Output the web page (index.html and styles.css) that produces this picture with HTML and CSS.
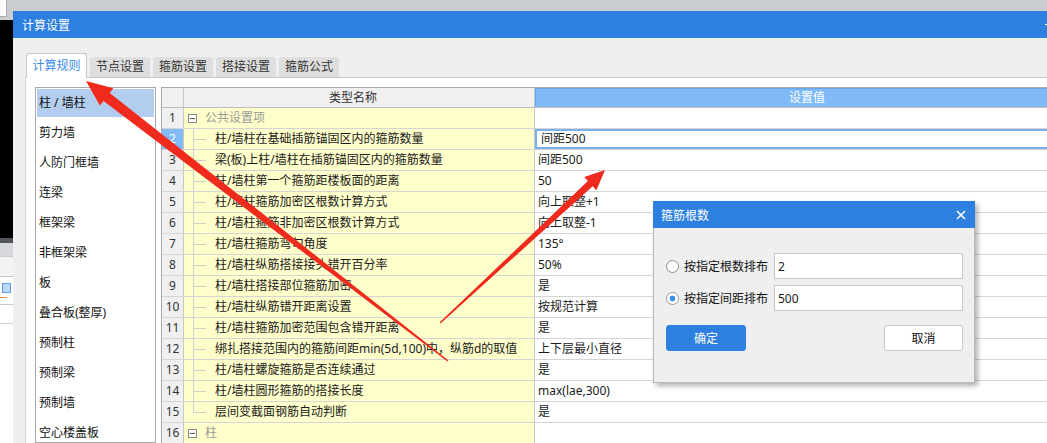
FILE: index.html
```html
<!DOCTYPE html>
<html lang="zh-CN">
<head>
    <meta charset="UTF-8">
    <title>计算设置</title>
    <link rel="stylesheet" href="styles.css">
</head>
<body>
<div class="desk">
    <!-- the application behind the settings window, only a sliver shows -->
    <div class="backdrop">
        <div class="bk-top"><span class="bk-box"></span></div>
        <div class="bk-dark"></div>
        <div class="bk-bar"></div>
        <div class="bk-band"></div>
        <div class="bk-row"></div>
        <div class="bk-tool"><span class="bk-icon"></span><span class="bk-dash"></span></div>
        <div class="bk-list"></div>
    </div>

    <div class="main">
        <div class="top-strip"></div>
        <div class="window">
            <div class="titlebar"><span>计算设置</span><span class="win-ctrl"></span></div>
            <div class="win-body">
                <div class="tabs">
                    <div class="tab active">计算规则</div>
                    <div class="tab">节点设置</div>
                    <div class="tab">箍筋设置</div>
                    <div class="tab">搭接设置</div>
                    <div class="tab">箍筋公式</div>
                </div>
                <div class="panel">
                    <ul class="cat-list">
                        <li class="selected">柱 / 墙柱</li>
                        <li>剪力墙</li>
                        <li>人防门框墙</li>
                        <li>连梁</li>
                        <li>框架梁</li>
                        <li>非框架梁</li>
                        <li>板</li>
                        <li>叠合板(整厚)</li>
                        <li>预制柱</li>
                        <li>预制梁</li>
                        <li>预制墙</li>
                        <li>空心楼盖板</li>
                    </ul>

                    <div class="grid">
                        <div class="row head">
                            <div class="num"></div>
                            <div class="name">类型名称</div>
                            <div class="val">设置值</div>
                        </div>
                        <div class="row group">
                            <div class="num">1</div>
                            <div class="name"><span class="toggle"></span>公共设置项</div>
                            <div class="val"></div>
                        </div>
                        <div class="row">
                            <div class="num sel">2</div>
                            <div class="name"><span class="branch"></span>柱/墙柱在基础插筋锚固区内的箍筋数量</div>
                            <div class="val edit">间距500</div>
                        </div>
                        <div class="row">
                            <div class="num">3</div>
                            <div class="name"><span class="branch"></span>梁(板)上柱/墙柱在插筋锚固区内的箍筋数量</div>
                            <div class="val">间距500</div>
                        </div>
                        <div class="row">
                            <div class="num">4</div>
                            <div class="name"><span class="branch"></span>柱/墙柱第一个箍筋距楼板面的距离</div>
                            <div class="val">50</div>
                        </div>
                        <div class="row">
                            <div class="num">5</div>
                            <div class="name"><span class="branch"></span>柱/墙柱箍筋加密区根数计算方式</div>
                            <div class="val">向上取整+1</div>
                        </div>
                        <div class="row">
                            <div class="num">6</div>
                            <div class="name"><span class="branch"></span>柱/墙柱箍筋非加密区根数计算方式</div>
                            <div class="val">向上取整-1</div>
                        </div>
                        <div class="row">
                            <div class="num">7</div>
                            <div class="name"><span class="branch"></span>柱/墙柱箍筋弯勾角度</div>
                            <div class="val">135°</div>
                        </div>
                        <div class="row">
                            <div class="num">8</div>
                            <div class="name"><span class="branch"></span>柱/墙柱纵筋搭接接头错开百分率</div>
                            <div class="val">50%</div>
                        </div>
                        <div class="row">
                            <div class="num">9</div>
                            <div class="name"><span class="branch"></span>柱/墙柱搭接部位箍筋加密</div>
                            <div class="val">是</div>
                        </div>
                        <div class="row">
                            <div class="num">10</div>
                            <div class="name"><span class="branch"></span>柱/墙柱纵筋错开距离设置</div>
                            <div class="val">按规范计算</div>
                        </div>
                        <div class="row">
                            <div class="num">11</div>
                            <div class="name"><span class="branch"></span>柱/墙柱箍筋加密范围包含错开距离</div>
                            <div class="val">是</div>
                        </div>
                        <div class="row">
                            <div class="num">12</div>
                            <div class="name"><span class="branch"></span>绑扎搭接范围内的箍筋间距min(5d,100)中，纵筋d的取值</div>
                            <div class="val">上下层最小直径</div>
                        </div>
                        <div class="row">
                            <div class="num">13</div>
                            <div class="name"><span class="branch"></span>柱/墙柱螺旋箍筋是否连续通过</div>
                            <div class="val">是</div>
                        </div>
                        <div class="row">
                            <div class="num">14</div>
                            <div class="name"><span class="branch"></span>柱/墙柱圆形箍筋的搭接长度</div>
                            <div class="val">max(lae,300)</div>
                        </div>
                        <div class="row">
                            <div class="num">15</div>
                            <div class="name"><span class="branch last"></span>层间变截面钢筋自动判断</div>
                            <div class="val">是</div>
                        </div>
                        <div class="row group">
                            <div class="num">16</div>
                            <div class="name"><span class="toggle"></span>柱</div>
                            <div class="val"></div>
                        </div>
                    </div>
                </div>
            </div>
        </div>
    </div>

    <!-- modal dialog -->
    <div class="dialog">
        <div class="dlg-title">
            <span>箍筋根数</span>
            <svg class="dlg-close" width="10" height="10" viewBox="0 0 10 10">
                <path d="M1,1 L9,9 M9,1 L1,9" stroke="#fff" stroke-width="1.6"/>
            </svg>
        </div>
        <div class="dlg-body">
            <div class="opt">
                <span class="radio"></span>
                <span class="opt-label">按指定根数排布</span>
                <span class="field">2</span>
            </div>
            <div class="opt">
                <span class="radio on"></span>
                <span class="opt-label">按指定间距排布</span>
                <span class="field">500</span>
            </div>
            <div class="dlg-btns">
                <button class="btn primary">确定</button>
                <button class="btn">取消</button>
            </div>
        </div>
    </div>

    <!-- red annotation arrows drawn over the screenshot -->
    <svg class="arrows" width="1047" height="443" viewBox="0 0 1047 443">
        <polygon fill="#f02a1c" points="86,81 113.3,88.2 109.7,92.9 448.5,360.4 447.5,361.6 103.5,100.9 99.9,105.6"/>
        <polygon fill="#f02a1c" points="605,170 596.4,190.2 592.7,186.2 440.5,323.5 439.5,322.5 587.9,181 584.2,177"/>
    </svg>
</div>
</body>
</html>
```

FILE: styles.css
```css
* {
    box-sizing: border-box;
}
body {
    margin: 0;
    width: 1047px;
    height: 443px;
    overflow: hidden;
    font-family: "Noto Sans", "Noto Sans CJK SC", sans-serif;
    font-size: 12px;
    color: #1a1a1a;
    background: #c9ccd0;
}
.desk {
    position: relative;
    display: flex;
    height: 443px;
}

/* sliver of the app behind */
.backdrop {
    width: 13px;
    flex: none;
    display: flex;
    flex-direction: column;
    background: #fff;
}
.bk-top { height: 20px; background: #c9ccd0; }
.bk-box {
    display: block;
    width: 7px; height: 17px;
    background: #fbfbfb;
    border-right: 1px solid #a9a9a9;
    border-bottom: 1px solid #a9a9a9;
}
.bk-dark { height: 218px; background: #000; }
.bk-bar { height: 5px; background: #50555c; }
.bk-band { height: 13px; background: #d6d8db; }
.bk-row {
    height: 21px;
    background: #f3f3f3;
    border-top: 1px solid #c9c9c9;
    border-bottom: 1px solid #c9c9c9;
}
.bk-tool {
    height: 28px;
    padding: 6px 0 0 2px;
    border-bottom: 1px solid #c9c9c9;
}
.bk-icon {
    display: block;
    width: 9px; height: 10px;
    background: #bcd9f7;
    border: 1px solid #5b9de3;
}
.bk-dash {
    display: block;
    width: 7px; height: 1px;
    margin: 4px 0 0 -2px;
    background: #e08a3c;
}
.bk-list { height: 19px; border-bottom: 1px solid #d2d2d2; }

/* settings window */
.main {
    flex: 1;
    min-width: 0;
    display: flex;
    flex-direction: column;
}
.top-strip { height: 11px; flex: none; background: #c9ccd0; }
.window {
    flex: 1;
    min-height: 0;
    display: flex;
    flex-direction: column;
    overflow: hidden;
    background: #efefef;
}
.titlebar {
    height: 27px;
    flex: none;
    display: flex;
    align-items: center;
    padding-left: 9px;
    background: #2d7fe0;
    color: #fff;
}
.win-ctrl {
    margin-left: auto;
    width: 2px; height: 1px;
    background: #fff;
}
.win-body {
    flex: 1;
    min-height: 0;
    display: flex;
    flex-direction: column;
    padding-left: 12px;
}

.tabs {
    display: flex;
    align-items: flex-end;
    gap: 3px;
    margin-top: 15px;
    padding-left: 1px;
    position: relative;
    z-index: 1;
}
.tab {
    width: 60px;
    height: 20px;
    line-height: 20px;
    text-align: center;
    background: #dedede;
    color: #333;
    border-radius: 3px 3px 0 0;
}
.tab.active {
    width: 61px;
    height: 25px;
    line-height: 23px;
    margin-bottom: -1px;
    background: #fff;
    color: #3a8ae6;
    border: 1px solid #c8c8c8;
    border-bottom: none;
}

.panel {
    flex: 1;
    min-height: 0;
    display: flex;
    gap: 5px;
    overflow: hidden;
    padding: 9px 0 0 9px;
    background: #fff;
    border-top: 1px solid #c8c8c8;
    border-left: 1px solid #d6d6d6;
}

.cat-list {
    list-style: none;
    margin: 0;
    padding: 1px;
    width: 121px;
    flex: none;
    border: 1px solid #a9a9a9;
}
.cat-list li {
    height: 28px;
    line-height: 28px;
    margin-bottom: 2px;
    padding-left: 2px;
    color: #111;
}
.cat-list li.selected {
    background: #b3cdee;
}

/* property grid */
.grid {
    flex: none;
    width: 918px;
    border-left: 1px solid #a9a9a9;
    border-top: 1px solid #a9a9a9;
}
.row {
    display: grid;
    grid-template-columns: 22px 351px 1fr;
    height: 21px;
    line-height: 20px;
    border-bottom: 1px solid #d5d5d5;
}
.num {
    text-align: center;
    background: #f0f0f0;
    border-right: 1px solid #c8c8c8;
    color: #333;
}
.num.sel {
    background: #80bbf8;
    color: #fff;
}
.name {
    display: flex;
    align-items: stretch;
    white-space: nowrap;
    background: #ffffcc;
    border-right: 1px solid #c8c8c8;
}
.val {
    padding-left: 3px;
    white-space: nowrap;
}
.val.edit {
    padding-left: 6px;
    box-shadow: inset 0 0 0 2px #78b0ea;
}

.row.head {
    height: 20px;
    line-height: 19px;
    border-bottom-color: #bdbdbd;
}
.row.head .name {
    justify-content: center;
    padding-right: 12px;
    background: #f0f0f0;
    color: #333;
}
.row.head .val {
    text-align: center;
    padding-left: 0;
    background: #80bbf8;
    color: #fff;
    border: 1px solid #6aa6ea;
    border-bottom: none;
    line-height: 18px;
}

.row.group .name {
    color: #9a9a9a;
}
.toggle {
    align-self: center;
    width: 9px;
    height: 9px;
    margin: 0 8px 0 4px;
    border: 1px solid #8a8a8a;
    background: linear-gradient(#555, #555) no-repeat center / 5px 1px;
    background-color: #fff;
}
.branch {
    width: 13px;
    margin: 0 9px;
    border-left: 1px solid #cfcfcf;
    background: linear-gradient(#cfcfcf, #cfcfcf) no-repeat 0 50% / 100% 1px;
}
.branch.last {
    border-left: none;
    background:
        linear-gradient(#cfcfcf, #cfcfcf) no-repeat 0 0 / 1px 50%,
        linear-gradient(#cfcfcf, #cfcfcf) no-repeat 0 50% / 100% 1px;
}

/* dialog */
.dialog {
    position: absolute;
    left: 653px;
    top: 201px;
    width: 322px;
    height: 182px;
    background: #efefef;
    border: 1px solid #b8b8b8;
    border-top: none;
    box-shadow: 3px 3px 5px rgba(0, 0, 0, 0.3);
    z-index: 5;
}
.dlg-title {
    height: 27px;
    display: flex;
    align-items: center;
    justify-content: space-between;
    padding: 0 9px 0 8px;
    margin: 0 -1px;
    background: #2d7fe0;
    color: #fff;
}
.dlg-body {
    padding: 25px 11px 0 12px;
}
.opt {
    display: flex;
    align-items: center;
    height: 26px;
    margin-bottom: 6px;
}
.radio {
    width: 13px;
    height: 13px;
    margin: 0 5px 0 0;
    border-radius: 50%;
    border: 1px solid #8c8c8c;
    background: #fff;
}
.radio.on {
    background: radial-gradient(circle, #3d8ee8 0 2.6px, #fff 3.2px);
    border-color: #9a9a9a;
}
.opt-label {
    width: 90px;
    color: #111;
}
.field {
    flex: 1;
    height: 26px;
    line-height: 26px;
    padding-left: 3px;
    background: #fff;
    border: 1px solid #c8c8c8;
}
.dlg-btns {
    display: flex;
    justify-content: space-between;
    margin-top: 14px;
}
.btn {
    width: 79px;
    height: 26px;
    padding: 0;
    font: inherit;
    color: #111;
    background: #fff;
    border: 1px solid #c8c8c8;
    border-radius: 3px;
}
.btn.primary {
    width: 80px;
    background: #2d7fe0;
    border-color: #2d7fe0;
    color: #fff;
}

.arrows {
    position: absolute;
    left: 0;
    top: 0;
    pointer-events: none;
    z-index: 6;
}
```
